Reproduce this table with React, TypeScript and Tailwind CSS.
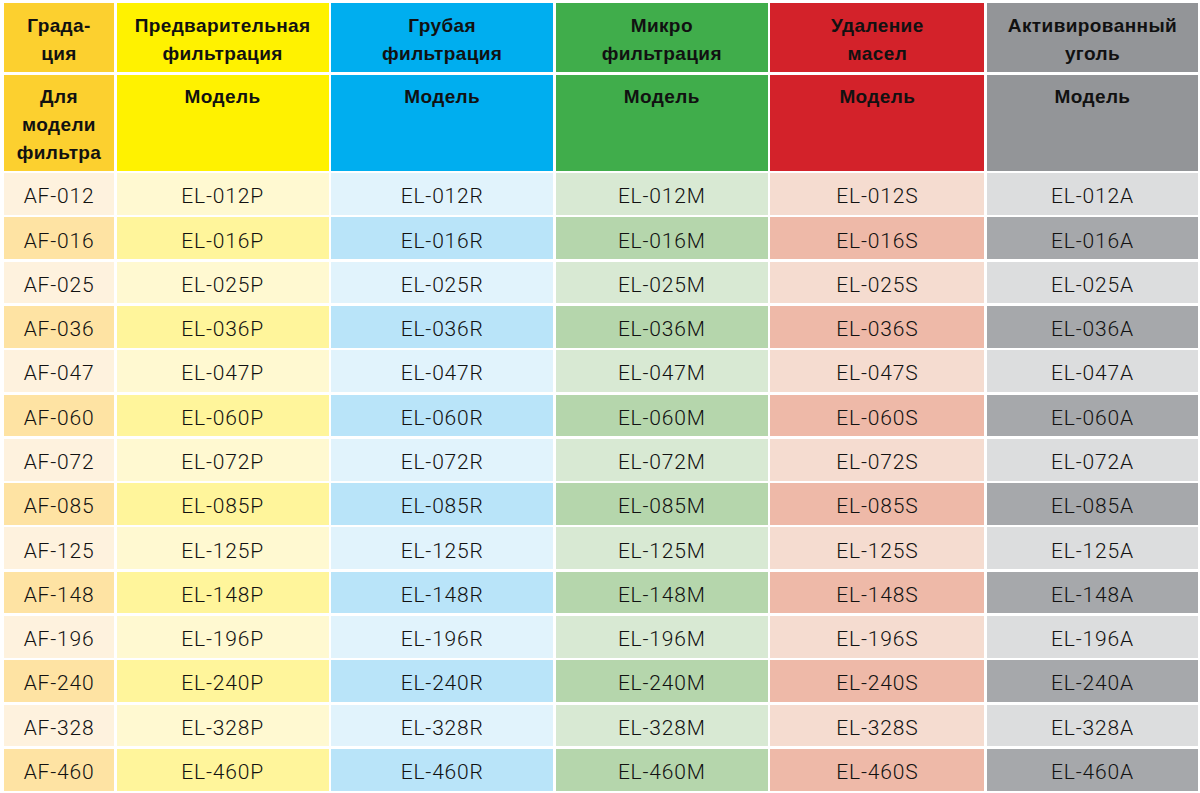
import React from "react";

const codes = ["012", "016", "025", "036", "047", "060", "072", "085", "125", "148", "196", "240", "328", "460"];

type Col = {
  head: string[];
  h: string;
  light: string;
  dark: string;
  suffix: string;
};

const cols: Col[] = [
  { head: ["Предварительная", "фильтрация"], h: "bg-[#fff200]", light: "bg-[#fff9d1]", dark: "bg-[#fff59b]", suffix: "P" },
  { head: ["Грубая", "фильтрация"], h: "bg-[#00aeef]", light: "bg-[#e1f3fc]", dark: "bg-[#b9e4f9]", suffix: "R" },
  { head: ["Микро", "фильтрация"], h: "bg-[#40ad4b]", light: "bg-[#d8e9d3]", dark: "bg-[#b5d6ac]", suffix: "M" },
  { head: ["Удаление", "масел"], h: "bg-[#d3222a]", light: "bg-[#f5dcd0]", dark: "bg-[#eeb9a8]", suffix: "S" },
  { head: ["Активированный", "уголь"], h: "bg-[#939598]", light: "bg-[#dcddde]", dark: "bg-[#a6a8ab]", suffix: "A" },
];

const headText = "font-bold text-[19px] leading-[28px] tracking-[0.4px] text-[#111] text-center";
const dataText = "font-light text-[21px] tracking-[0.8px] text-[#111] flex items-center justify-center pt-[6px]";

export default function App() {
  return (
    <div
      className="w-[1200px] h-[793px] bg-white pl-[4px] pt-[3px] overflow-hidden"
      style={{ fontFamily: '"Liberation Sans", Arial, sans-serif' }}
    >
      <div className="grid grid-cols-[110px_212px_222px_212px_214px_211px] grid-rows-[69px_96px_repeat(14,41.7px)] gap-[2.6px]">
        {/* header row 1 */}
        <div className={`bg-[#fcd02f] flex flex-col items-center justify-center pt-[4px] ${headText}`}>
          <span>Града-</span>
          <span>ция</span>
        </div>
        {cols.map((c, i) => (
          <div key={i} className={`${c.h} flex flex-col items-center justify-center pt-[4px] ${headText}`}>
            <span>{c.head[0]}</span>
            <span>{c.head[1]}</span>
          </div>
        ))}
        {/* header row 2 */}
        <div className={`bg-[#fcd02f] flex flex-col items-center pt-[8px] ${headText}`}>
          <span>Для</span>
          <span>модели</span>
          <span>фильтра</span>
        </div>
        {cols.map((c, i) => (
          <div key={i} className={`${c.h} flex flex-col items-center pt-[8px] ${headText}`}>
            <span>Модель</span>
          </div>
        ))}
        {/* data */}
        {codes.map((code, r) => {
          const dark = r % 2 === 1;
          return (
            <React.Fragment key={code}>
              <div
                className={`${dark ? "bg-[#fee3a3]" : "bg-[#fef2de]"} ${dataText}`}
                style={{ fontFamily: "Roboto, sans-serif" }}
              >
                AF-{code}
              </div>
              {cols.map((c, i) => (
                <div
                  key={i}
                  className={`${dark ? c.dark : c.light} ${dataText}`}
                  style={{ fontFamily: "Roboto, sans-serif" }}
                >
                  EL-{code}
                  {c.suffix}
                </div>
              ))}
            </React.Fragment>
          );
        })}
      </div>
    </div>
  );
}
